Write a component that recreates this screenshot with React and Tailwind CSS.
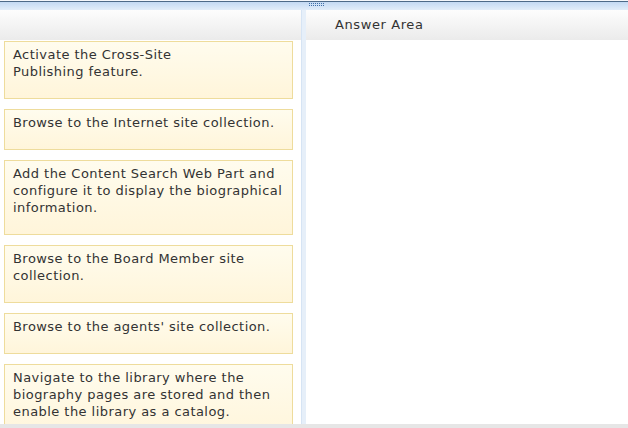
import React from 'react';

const items = [
  ['Activate the Cross-Site', 'Publishing feature.'],
  ['Browse to the Internet site collection.'],
  ['Add the Content Search Web Part and', 'configure it to display the biographical', 'information.'],
  ['Browse to the Board Member site', 'collection.'],
  ["Browse to the agents' site collection."],
  ['Navigate to the library where the', 'biography pages are stored and then', 'enable the library as a catalog.'],
];

function Grip() {
  const dots = [];
  for (let i = 0; i < 8; i++) {
    dots.push(<rect key={'a' + i} x={i * 2} y={0} width="1" height="1" />);
    dots.push(<rect key={'b' + i} x={i * 2} y={2} width="1" height="1" />);
  }
  return (
    <svg width="16" height="3" viewBox="0 0 16 3" className="fill-[#3f6fa8]">
      {dots}
    </svg>
  );
}

export default function App() {
  return (
    <div
      className="flex h-[428px] w-[628px] flex-col overflow-hidden bg-white text-[#333]"
      style={{ fontFamily: '"DejaVu Sans", Verdana, sans-serif' }}
    >
      <div className="h-px bg-[#f4f7fb]" />
      <div className="h-px bg-[#4d6a88]" />
      <div className="flex h-[8px] items-start justify-center bg-gradient-to-b from-[#c3d9f3] to-[#e2edf9] pt-[1px]">
        <div className="ml-[5px]">
          <Grip />
        </div>
      </div>

      <div className="flex h-[414px]">
        <div className="flex w-[301px] flex-col">
          <div className="h-[30px] shrink-0 bg-gradient-to-b from-[#fdfdfd] to-[#ebebeb]" />
          <div className="flex flex-col gap-[10px] pl-[4px] pt-px">
            {items.map((lines, i) => (
              <div
                key={i}
                className="w-[289px] shrink-0 border border-[#eedc9c] bg-gradient-to-b from-[#fffcee] to-[#fff5da] pb-[18px] pl-[8px] pt-[4px] text-[13px] leading-[17px] tracking-[0.45px]"
              >
                {lines.map((l, j) => (
                  <div key={j} className="whitespace-nowrap">
                    {l}
                  </div>
                ))}
              </div>
            ))}
          </div>
        </div>

        <div className="w-[5px] shrink-0 border-l border-[#d6e4f4] bg-[#e6eff9]" />

        <div className="flex flex-1 flex-col">
          <div className="flex h-[30px] items-center bg-gradient-to-b from-[#fdfdfd] to-[#ebebeb] pl-[29px] text-[13px] tracking-[0.6px]">
            Answer Area
          </div>
          <div className="flex-1 bg-white" />
        </div>
      </div>

      <div className="h-[4px] bg-[#e6e6e6]" />
    </div>
  );
}
